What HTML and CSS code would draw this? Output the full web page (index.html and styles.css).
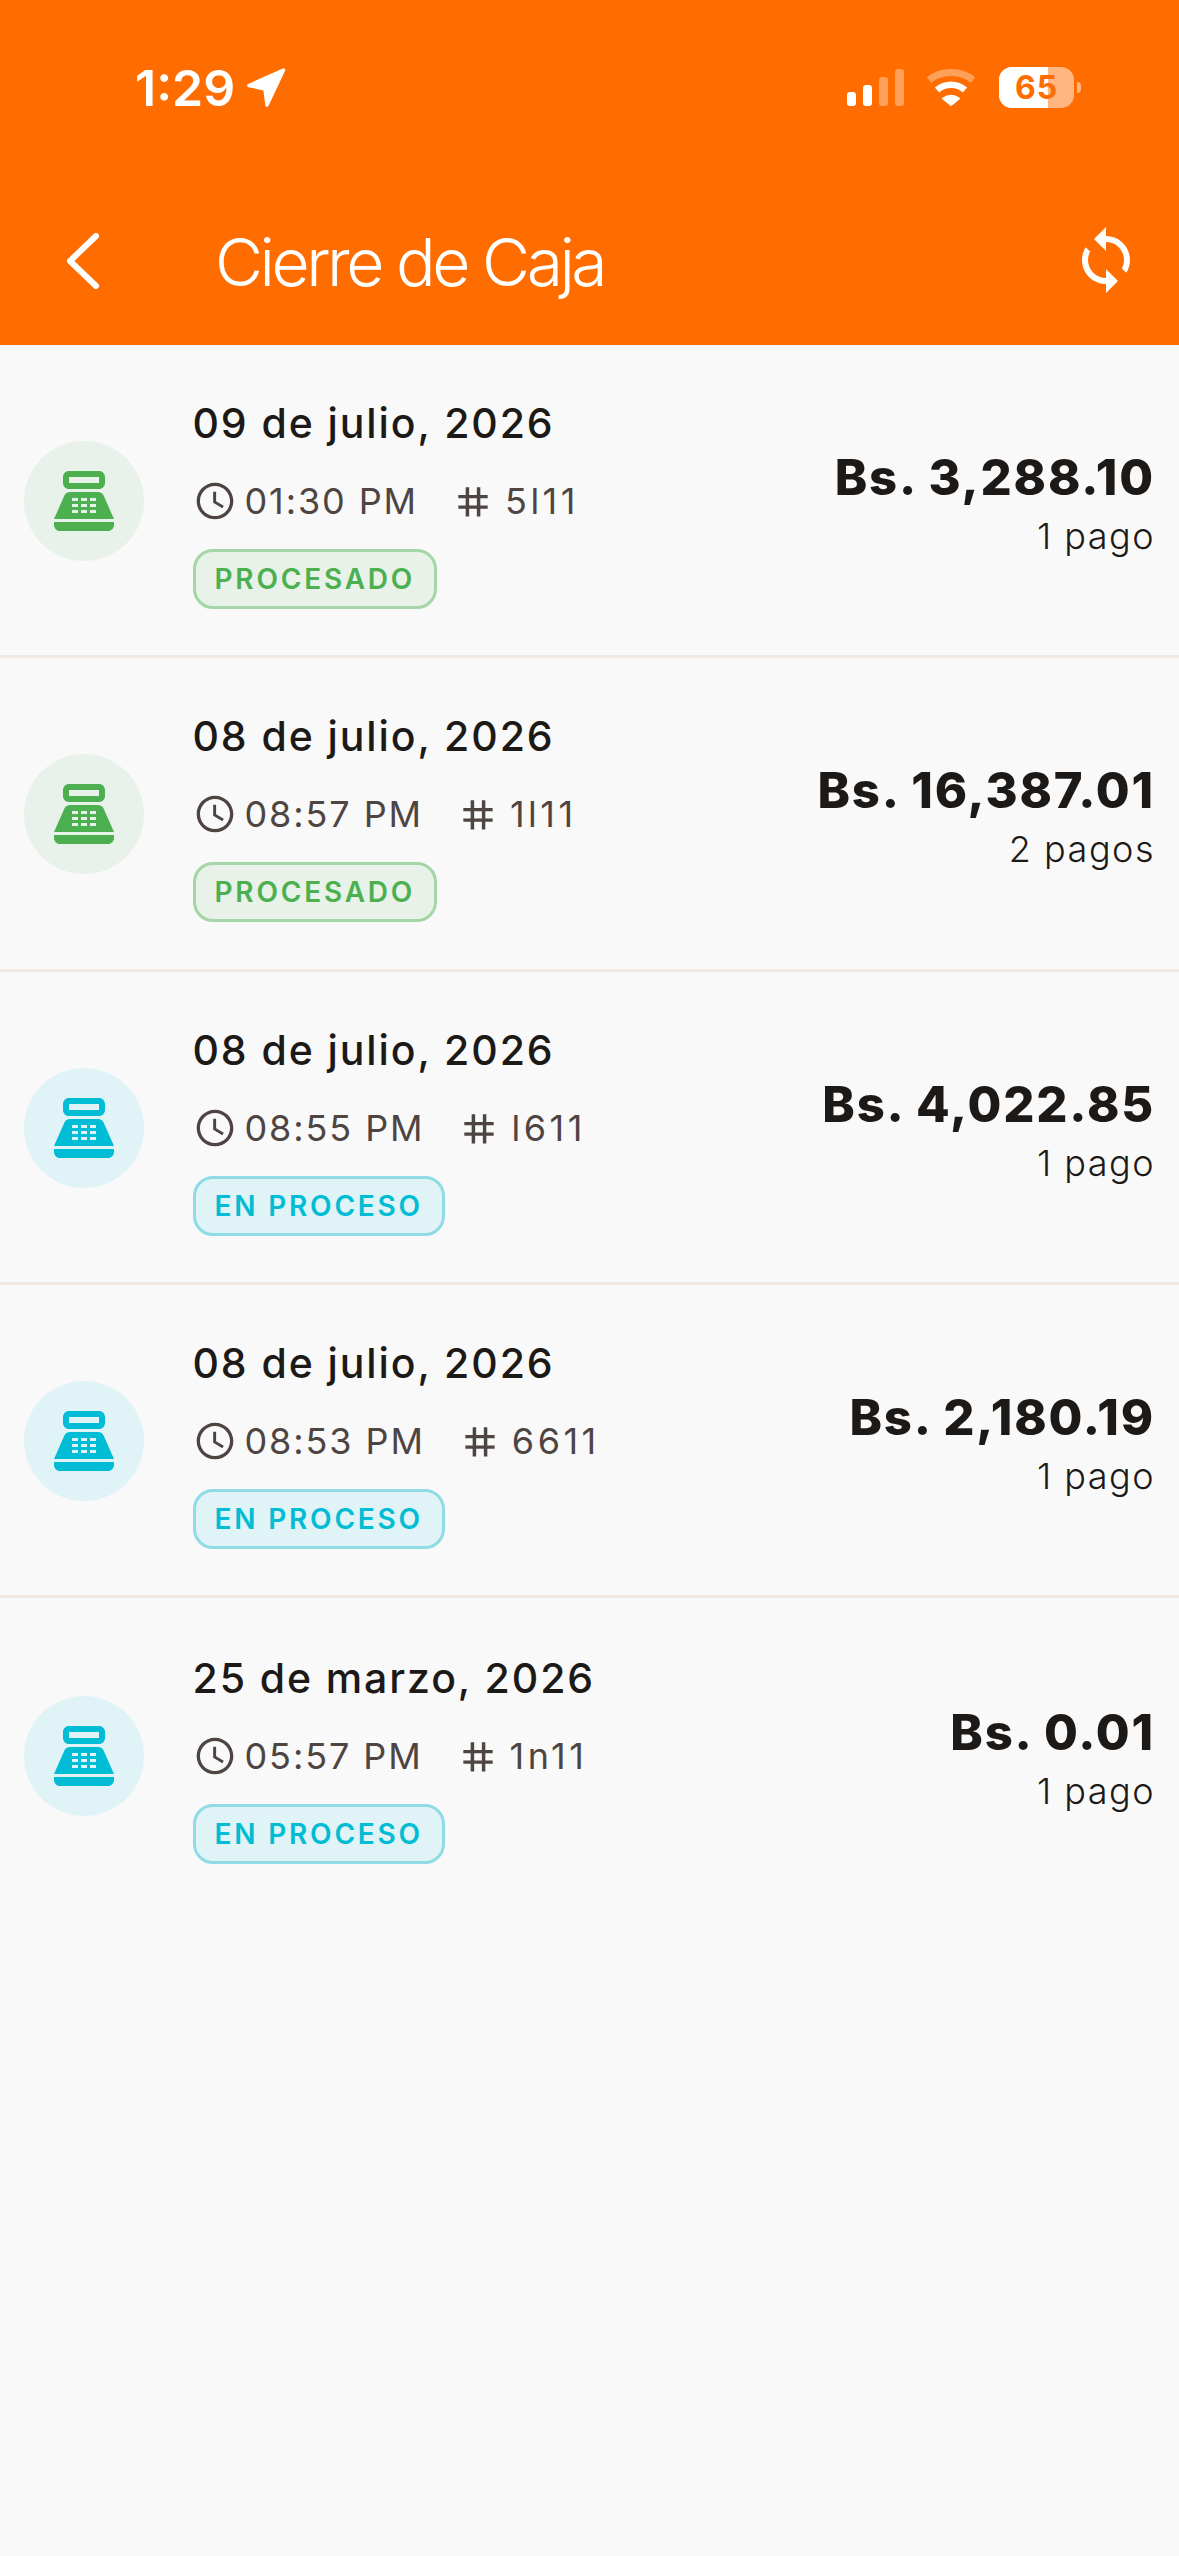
FILE: index.html
```html
<!DOCTYPE html>
<html lang="es">
<head>
  <meta charset="UTF-8" />
  <title>Cierre de Caja</title>
  <meta name="viewport" content="width=device-width, initial-scale=1.0" />
  <link rel="stylesheet" href="styles.css">
</head>
<body>
  <svg class="sprite" xmlns="http://www.w3.org/2000/svg">
    <symbol id="i-register" viewBox="0 0 24 24">
      <path fill-rule="evenodd" d="M17 2H7C5.900 2 5 2.900 5 4v2c0 1.100.9 2 2 2h10c1.100 0 2-.9 2-2V4c0-1.100-.9-2-2-2zM17 6H7V4h10zM20 22H4c-1.100 0-2-.9-2-2v-1h20v1c0 1.100-.9 2-2 2zM18.530 10.190C18.210 9.470 17.490 9 16.700 9H7.300c-.79 0-1.510.47-1.830 1.190L2 18h20zM8 11h2v1H8zM11 11h2v1h-2zM14 11h2v1h-2zM8 13h2v1H8zM11 13h2v1h-2zM14 13h2v1h-2zM8 15h2v1H8zM11 15h2v1h-2zM14 15h2v1h-2z"/>
    </symbol>
    <symbol id="i-clock" viewBox="0 0 24 24">
      <path d="M11.990 2C6.470 2 2 6.480 2 12s4.470 10 9.990 10C17.520 22 22 17.520 22 12S17.520 2 11.990 2zM12 20.200c-4.530 0-8.200-3.670-8.200-8.200S7.470 3.800 12 3.800s8.200 3.670 8.200 8.200-3.670 8.200-8.200 8.200zM12.600 7H11v5.900l5 3 .8-1.300-4.200-2.500z"/>
    </symbol>
    <symbol id="i-tag" viewBox="0 0 24 24">
      <path fill-rule="evenodd" d="M20 10.500V8.700h-4V4.500h-1.900v4.200H9.900V4.500H8v4.200H4v1.800h4v3.900H4v1.800h4v4.300h1.900v-4.300h4.200v4.300H16v-4.300h4v-1.800h-4v-3.900zM14.100 14.400H9.900v-3.900h4.200z"/>
    </symbol>
  </svg>

  <header class="app-header">
    <div class="status-bar">
      <div class="status-time">
        <span>1:29</span>
        <svg class="status-arrow" viewBox="0 0 40 40"><path d="M36.500 2 2 17.500 18 21l2 16z" fill="#fff" stroke="#fff" stroke-width="3.500" stroke-linejoin="round"/></svg>
      </div>
      <div class="status-icons">
        <div class="signal">
          <i class="bar bar-1"></i><i class="bar bar-2"></i><i class="bar bar-3 dim"></i><i class="bar bar-4 dim"></i>
        </div>
        <svg class="wifi" viewBox="0 0 50 37">
          <path d="M3 11C15 1 35 1 47 11" fill="none" stroke="#fff" stroke-opacity=".35" stroke-width="7"/>
          <path d="M11 21c8-7 20-7 28 0" fill="none" stroke="#fff" stroke-width="6.500"/>
          <path d="M25 36 17 29.500c5-3.500 11-3.500 16 0z" fill="#fff" stroke="#fff" stroke-width="2" stroke-linejoin="round"/>
        </svg>
        <div class="battery">
          <div class="battery-body"><div class="battery-fill"></div><span class="battery-level">65</span></div>
          <div class="battery-tip"></div>
        </div>
      </div>
    </div>
    <div class="toolbar">
      <svg class="back" viewBox="0 0 34 56"><path d="M30 3 4 28l26 25" fill="none" stroke="#fff" stroke-width="6" stroke-linecap="round" stroke-linejoin="round"/></svg>
      <h1>Cierre de Caja</h1>
      <svg class="refresh" viewBox="0 0 24 24"><path fill="#fff" d="M12 4V1L8 5l4 4V6c3.310 0 6 2.690 6 6 0 1.010-.25 1.970-.7 2.800l1.460 1.460C19.540 15.030 20 13.570 20 12c0-4.420-3.580-8-8-8zm0 14c-3.310 0-6-2.690-6-6 0-1.010.25-1.970.7-2.800L5.240 7.740C4.460 8.970 4 10.430 4 12c0 4.420 3.580 8 8 8v3l4-4-4-4v3z"/></svg>
    </div>
  </header>

  <ul class="list">
    <li class="row done">
      <div class="avatar"><svg><use href="#i-register"/></svg></div>
      <div class="info">
        <div class="date">09 de julio, 2026</div>
        <div class="meta">
          <svg class="meta-icon"><use href="#i-clock"/></svg><span class="time">01:30 PM</span>
          <svg class="meta-icon tag"><use href="#i-tag"/></svg><span class="code">5l11</span>
        </div>
        <span class="badge">PROCESADO</span>
      </div>
      <div class="totals">
        <div class="amount">Bs. 3,288.10</div>
        <div class="count">1 pago</div>
      </div>
    </li>
    <li class="row done">
      <div class="avatar"><svg><use href="#i-register"/></svg></div>
      <div class="info">
        <div class="date">08 de julio, 2026</div>
        <div class="meta">
          <svg class="meta-icon"><use href="#i-clock"/></svg><span class="time">08:57 PM</span>
          <svg class="meta-icon tag"><use href="#i-tag"/></svg><span class="code">1l11</span>
        </div>
        <span class="badge">PROCESADO</span>
      </div>
      <div class="totals">
        <div class="amount">Bs. 16,387.01</div>
        <div class="count">2 pagos</div>
      </div>
    </li>
    <li class="row open">
      <div class="avatar"><svg><use href="#i-register"/></svg></div>
      <div class="info">
        <div class="date">08 de julio, 2026</div>
        <div class="meta">
          <svg class="meta-icon"><use href="#i-clock"/></svg><span class="time">08:55 PM</span>
          <svg class="meta-icon tag"><use href="#i-tag"/></svg><span class="code">l611</span>
        </div>
        <span class="badge">EN PROCESO</span>
      </div>
      <div class="totals">
        <div class="amount">Bs. 4,022.85</div>
        <div class="count">1 pago</div>
      </div>
    </li>
    <li class="row open">
      <div class="avatar"><svg><use href="#i-register"/></svg></div>
      <div class="info">
        <div class="date">08 de julio, 2026</div>
        <div class="meta">
          <svg class="meta-icon"><use href="#i-clock"/></svg><span class="time">08:53 PM</span>
          <svg class="meta-icon tag"><use href="#i-tag"/></svg><span class="code">6611</span>
        </div>
        <span class="badge">EN PROCESO</span>
      </div>
      <div class="totals">
        <div class="amount">Bs. 2,180.19</div>
        <div class="count">1 pago</div>
      </div>
    </li>
    <li class="row open">
      <div class="avatar"><svg><use href="#i-register"/></svg></div>
      <div class="info">
        <div class="date">25 de marzo, 2026</div>
        <div class="meta">
          <svg class="meta-icon"><use href="#i-clock"/></svg><span class="time">05:57 PM</span>
          <svg class="meta-icon tag"><use href="#i-tag"/></svg><span class="code">1n11</span>
        </div>
        <span class="badge">EN PROCESO</span>
      </div>
      <div class="totals">
        <div class="amount">Bs. 0.01</div>
        <div class="count">1 pago</div>
      </div>
    </li>
  </ul>
</body>
</html>
```

FILE: styles.css
```css
:root {
  --orange: #ff6d00;
  --bg: #f9f9f9;
  --text-dark: #1c1917;
  --text-muted: #4e4543;
  --divider: #f0e9e3;
}

* {
  box-sizing: border-box;
}

body {
  margin: 0;
  background: var(--bg);
  font-family: Inter, "Liberation Sans", sans-serif;
  color: var(--text-dark);
  min-height: 100vh;
}

.sprite {
  display: none;
}

/* header */
.app-header {
  height: 345px;
  background: var(--orange);
  color: #fff;
  display: flex;
  flex-direction: column;
}

.status-bar {
  height: 130px;
  padding: 67px 98px 0 135px;
  display: flex;
  justify-content: space-between;
  align-items: flex-start;
}

.status-time {
  display: flex;
  align-items: center;
  gap: 12px;
  height: 41px;
  font-size: 50px;
  font-weight: 600;
  letter-spacing: 0;
}

.status-arrow {
  width: 40px;
  height: 40px;
}

.status-icons {
  display: flex;
  align-items: center;
  height: 41px;
}

.signal {
  display: flex;
  align-items: flex-end;
  gap: 7px;
  height: 37px;
  margin-right: 22px;
}

.bar {
  width: 9px;
  background: #fff;
  border-radius: 3px;
}

.bar-1 { height: 14px; }
.bar-2 { height: 21px; }
.bar-3 { height: 29px; }
.bar-4 { height: 37px; }

.dim {
  opacity: 0.35;
}

.wifi {
  width: 50px;
  height: 37px;
  margin-right: 23px;
}

.battery {
  display: flex;
  align-items: center;
  gap: 3px;
}

.battery-body {
  position: relative;
  width: 75px;
  height: 41px;
  border-radius: 13px;
  background: rgba(255, 255, 255, 0.5);
  overflow: hidden;
  display: flex;
  justify-content: center;
  align-items: center;
}

.battery-fill {
  position: absolute;
  left: 0;
  top: 0;
  bottom: 0;
  width: 65%;
  background: #fff;
}

.battery-level {
  position: relative;
  font-size: 32px;
  font-weight: 700;
  letter-spacing: 1px;
  color: var(--orange);
}

.battery-tip {
  width: 4px;
  height: 11px;
  border-radius: 0 4px 4px 0;
  background: rgba(255, 255, 255, 0.5);
}

.toolbar {
  flex: 1;
  display: flex;
  align-items: flex-start;
  padding: 98px 37px 0 66px;
}

.back {
  width: 34px;
  height: 56px;
  margin-top: 5px;
}

h1 {
  flex: 1;
  margin: 0 0 0 115px;
  font-size: 66px;
  font-weight: 300;
  line-height: 68px;
  letter-spacing: -3.500px;
}

.refresh {
  width: 72px;
  height: 72px;
  margin-top: -4px;
}

/* list */
.list {
  list-style: none;
  margin: 0;
  padding: 0;
}

.row {
  height: 313.300px;
  padding: 0 24px;
  display: flex;
  align-items: center;
  border-bottom: 3px solid var(--divider);
}

.row:last-child {
  border-bottom: none;
}

.avatar {
  width: 120px;
  height: 120px;
  border-radius: 50%;
  display: flex;
  justify-content: center;
  align-items: center;
  flex-shrink: 0;
  margin: 2px 48.500px 0 0;
}

.avatar svg {
  width: 72px;
  height: 72px;
  fill: currentColor;
}

.done .avatar {
  background: #e9f2ea;
  color: #4caf50;
}

.open .avatar {
  background: #e0f3f6;
  color: #00bcd4;
}

.info {
  flex: 1;
  display: flex;
  flex-direction: column;
  align-items: flex-start;
  margin-top: 8px;
}

.date {
  font-size: 41px;
  font-weight: 500;
  line-height: 48px;
  letter-spacing: 1.900px;
}

.meta {
  display: flex;
  align-items: center;
  height: 42px;
  margin: 33px 0 27px;
  color: var(--text-muted);
  font-size: 36px;
  letter-spacing: 1.900px;
}

.meta-icon {
  width: 44px;
  height: 44px;
  fill: currentColor;
  margin-right: 8px;
}

.meta-icon.tag {
  margin-left: 33px;
  margin-right: 10px;
}

.code {
  letter-spacing: 3.500px;
}

.badge {
  height: 60px;
  padding: 0 19px;
  border-radius: 20px;
  border: 3px solid;
  display: flex;
  align-items: center;
  font-size: 28px;
  font-weight: 600;
  letter-spacing: 2.800px;
}

.done .badge {
  background: #e8f2e9;
  border-color: #a5d6a7;
  color: #4caf50;
}

.open .badge {
  background: #e0f3f6;
  border-color: #8fdce6;
  color: #00bcd4;
}

.totals {
  text-align: right;
  margin-top: 10px;
}

.amount {
  font-size: 49px;
  font-weight: 800;
  line-height: 54px;
  letter-spacing: 1.800px;
}

.count {
  font-size: 36px;
  font-weight: 300;
  line-height: 46px;
  letter-spacing: 1.500px;
  margin-top: 8px;
}
```
